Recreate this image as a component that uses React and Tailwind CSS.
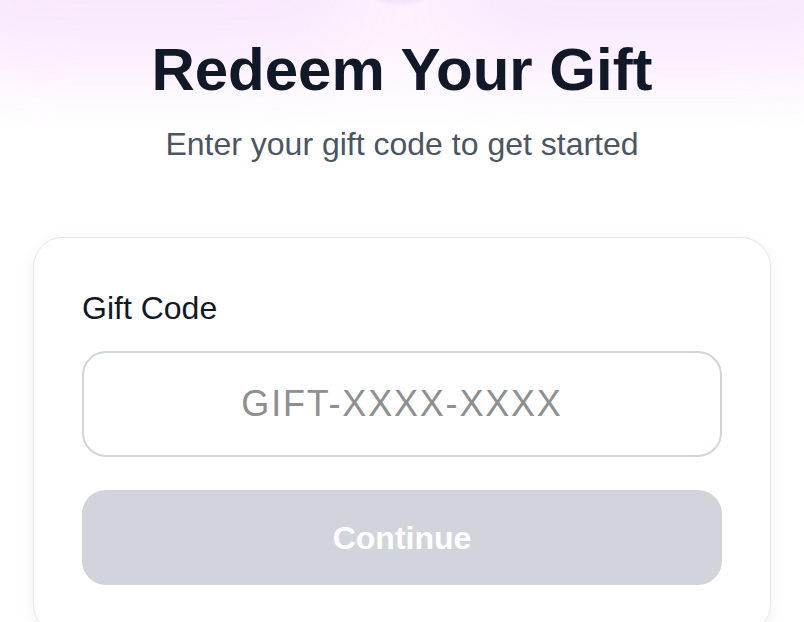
import React from "react";

export default function App() {
  return (
    <div
      className="relative w-[804px] h-[622px] overflow-hidden bg-white"
      style={{ fontFamily: '"Liberation Sans", Arial, sans-serif' }}
    >
      {/* soft background glow */}
      <div className="pointer-events-none absolute inset-x-0 top-0 h-[130px] bg-gradient-to-b from-[#fdf2fe] via-[#fef7ff] to-white" />
      <div className="pointer-events-none absolute left-[-60px] top-[-70px] w-[420px] h-[120px] rounded-full bg-[#f8e6fd] blur-2xl opacity-90" />
      <div className="pointer-events-none absolute left-[450px] top-[-70px] w-[420px] h-[125px] rounded-full bg-[#f7e8fd] blur-2xl opacity-90" />
      <div className="pointer-events-none absolute left-[365px] top-[-60px] w-[70px] h-[64px] rounded-full bg-[#efe3fc] blur-[2px]" />

      <div className="relative flex flex-col items-center">
        <h1 className="mt-[34px] text-[60px] leading-[72px] font-bold text-[#111827]">
          Redeem Your Gift
        </h1>
        <p className="mt-[14px] text-[32px] leading-[48px] text-[#4b5563]">
          Enter your gift code to get started
        </p>

        <div className="mt-[69px] w-[738px] rounded-[30px] border-[1.5px] border-[#e5e7eb] bg-white px-[48px] pt-[48px] pb-[48px] shadow-[0_4px_16px_rgba(0,0,0,0.06)]">
          <label className="block text-[32px] leading-[44px] text-[#111827]">
            Gift Code
          </label>
          <div className="mt-[21px] flex h-[106px] items-center justify-center rounded-[24px] border-2 border-[#d1d5db] bg-white">
            <span className="text-[36px] tracking-[0.05em] text-[#8f8f8f]">
              GIFT-XXXX-XXXX
            </span>
          </div>
          <button className="mt-[33px] flex h-[95px] w-full items-center justify-center rounded-[24px] bg-[#d1d5db] text-[32px] font-bold text-white">
            Continue
          </button>
        </div>
      </div>
    </div>
  );
}
